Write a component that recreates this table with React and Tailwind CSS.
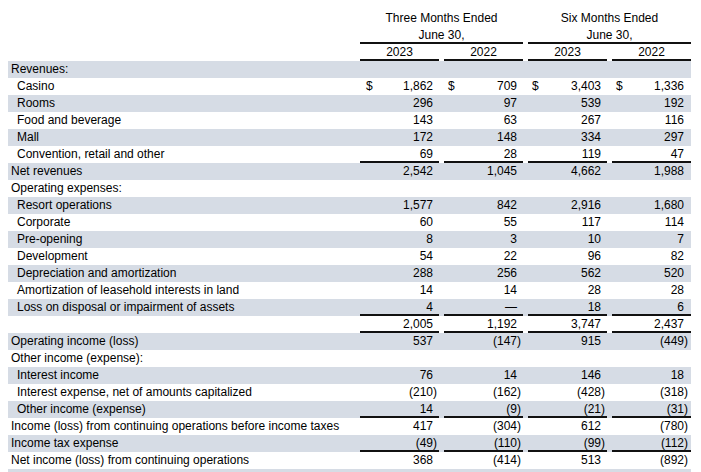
import React from "react";

const rows = [
  { label: "Revenues:", indent: 0, vals: null },
  { label: "Casino", indent: 1, vals: ["1,862", "709", "3,403", "1,336"], dollar: true },
  { label: "Rooms", indent: 1, vals: ["296", "97", "539", "192"] },
  { label: "Food and beverage", indent: 1, vals: ["143", "63", "267", "116"] },
  { label: "Mall", indent: 1, vals: ["172", "148", "334", "297"] },
  { label: "Convention, retail and other", indent: 1, vals: ["69", "28", "119", "47"], line: true },
  { label: "Net revenues", indent: 0, vals: ["2,542", "1,045", "4,662", "1,988"] },
  { label: "Operating expenses:", indent: 0, vals: null },
  { label: "Resort operations", indent: 1, vals: ["1,577", "842", "2,916", "1,680"] },
  { label: "Corporate", indent: 1, vals: ["60", "55", "117", "114"] },
  { label: "Pre-opening", indent: 1, vals: ["8", "3", "10", "7"] },
  { label: "Development", indent: 1, vals: ["54", "22", "96", "82"] },
  { label: "Depreciation and amortization", indent: 1, vals: ["288", "256", "562", "520"] },
  { label: "Amortization of leasehold interests in land", indent: 1, vals: ["14", "14", "28", "28"] },
  { label: "Loss on disposal or impairment of assets", indent: 1, vals: ["4", "—", "18", "6"], line: true },
  { label: "", indent: 0, vals: ["2,005", "1,192", "3,747", "2,437"], line: true },
  { label: "Operating income (loss)", indent: 0, vals: ["537", "(147)", "915", "(449)"] },
  { label: "Other income (expense):", indent: 0, vals: null },
  { label: "Interest income", indent: 1, vals: ["76", "14", "146", "18"] },
  { label: "Interest expense, net of amounts capitalized", indent: 1, vals: ["(210)", "(162)", "(428)", "(318)"] },
  { label: "Other income (expense)", indent: 1, vals: ["14", "(9)", "(21)", "(31)"], line: true },
  { label: "Income (loss) from continuing operations before income taxes", indent: 0, vals: ["417", "(304)", "612", "(780)"] },
  { label: "Income tax expense", indent: 0, vals: ["(49)", "(110)", "(99)", "(112)"], line: true },
  { label: "Net income (loss) from continuing operations", indent: 0, vals: ["368", "(414)", "513", "(892)"] },
  { label: "", indent: 0, vals: null },
];

const dollarPad = ["pl-[6px]", "pl-[4px]", "pl-[4px]", "pl-[4px]"];
const rightPad = ["pr-[2px]", "pr-[2px]", "pr-[2px]", "pr-[3px]"];

function NumCell({ v, i, dollar, line }) {
  const neg = v && v.startsWith("(");
  return (
    <div className="w-[84px] pl-[5px] h-full">
      <div
        className={
          "flex h-full justify-between " +
          (line ? "shadow-[inset_0_-2px_0_#111]" : "")
        }
      >
        <span className={dollarPad[i]}>{dollar ? "$" : ""}</span>
        <span className={rightPad[i]}>
          {v}
          {v && !neg ? <span className="invisible">)</span> : null}
        </span>
      </div>
    </div>
  );
}

export default function App() {
  return (
    <div
      className="w-[701px] h-[472px] overflow-hidden bg-white text-black text-[12px] leading-[17px] pt-[10px] pl-[8px]"
      style={{ fontFamily: '"Liberation Sans", Arial, sans-serif' }}
    >
      <div className="w-[683px]">
        {/* Header row 1 */}
        <div className="flex h-[17px]">
          <div className="w-[347px]" />
          <div className="w-[168px] pl-[5px] text-center">Three Months Ended</div>
          <div className="w-[168px] pl-[5px] text-center">Six Months Ended</div>
        </div>
        <div className="flex h-[17px]">
          <div className="w-[347px]" />
          <div className="w-[168px] pl-[5px]">
            <div className="text-center h-full shadow-[inset_0_-2px_0_#111]">June 30,</div>
          </div>
          <div className="w-[168px] pl-[5px]">
            <div className="text-center h-full shadow-[inset_0_-2px_0_#111]">June 30,</div>
          </div>
        </div>
        <div className="flex h-[17px]">
          <div className="w-[347px]" />
          {["2023", "2022", "2023", "2022"].map((y, i) => (
            <div key={i} className="w-[84px] pl-[5px]">
              <div className="text-center h-full shadow-[inset_0_-2px_0_#111]">{y}</div>
            </div>
          ))}
        </div>
        {rows.map((r, idx) => (
          <div
            key={idx}
            className={"flex h-[17px] " + (idx % 2 === 0 ? "bg-[#d6dce5]" : "bg-white")}
          >
            <div
              className={
                "w-[347px] whitespace-nowrap " + (r.indent ? "pl-[9px]" : "pl-[3px]")
              }
            >
              {r.label}
            </div>
            {r.vals
              ? r.vals.map((v, i) => (
                  <NumCell key={i} v={v} i={i} dollar={r.dollar} line={r.line} />
                ))
              : null}
          </div>
        ))}
      </div>
    </div>
  );
}
